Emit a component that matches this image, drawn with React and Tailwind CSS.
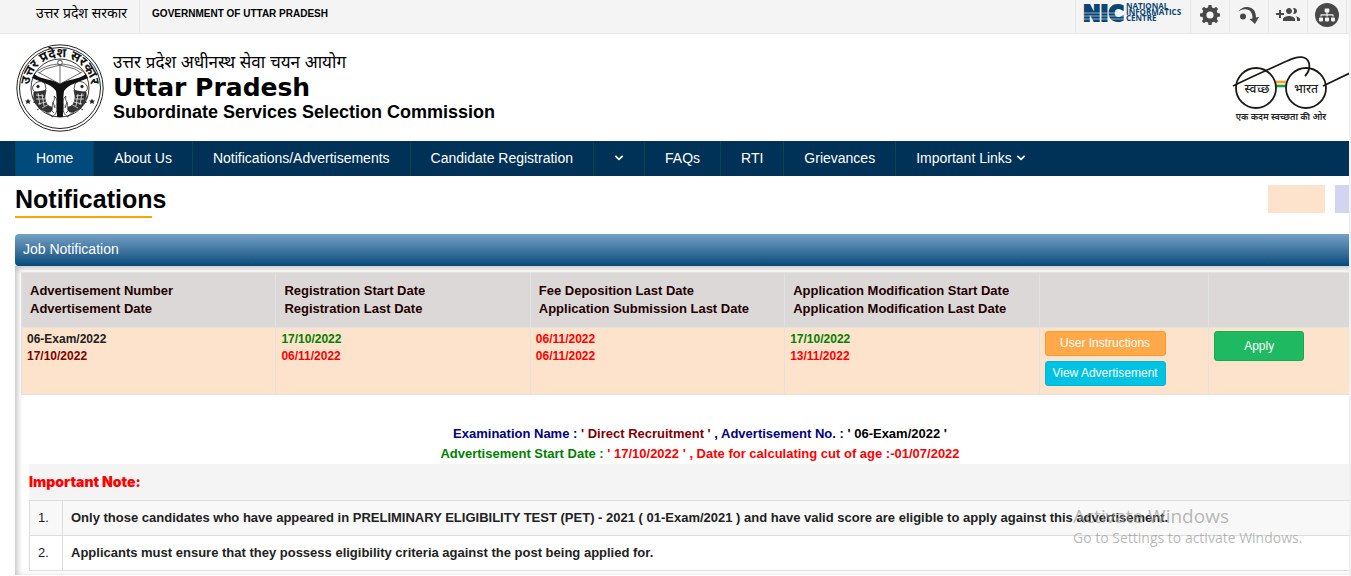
import { FaSitemap } from 'react-icons/fa';

const Chevron = () => (
  <svg viewBox="0 0 10 8" className="inline-block h-2 w-[10px]" fill="none" stroke="currentColor" strokeWidth="1.7" aria-hidden="true">
    <path d="M1.3 1.8 5 5.4 8.7 1.8" />
  </svg>
);

function Fish() {
  return (
    <g fill="none" stroke="#222" strokeWidth="0.8">
      <path d="M17 42c3-5 9-6 12-2l1 5c-2 3-6 4-10 3-3-1-4-3-3-6z" />
      <circle cx="22" cy="42.500" r="1.3" fill="#222" />
      <path d="M18 48c-1 8 3 17 13 20 4 1 6-2 5-5-4 0-8-5-7-12l1-5" fill="#333" />
      <path d="M20 51l8 1M20 55l9 0M22 60l8-2M26 64l7-4M22 49l2 12M26 50l2 12" stroke="#fff" strokeWidth="0.7" />
      <path d="M37 63c-2-5 3-6 1-11 4 3 3 7 2 10 2 4 0 9-4 11-1-4-5-2-6-6M35 66l3 3M37 58l2 6" />
      <path d="M16 52l2 3M17 58l3 1M21 66l3-2" />
    </g>
  );
}

function Emblem() {
  return (
    <svg viewBox="0 0 88 88" className="size-[88px] shrink-0" role="img" aria-label="Uttar Pradesh Sarkar">
      <defs>
        <path id="rim" d="M14 52a31 31 0 1 1 60 0" />
      </defs>
      <circle cx="44" cy="44" r="43.2" fill="#fff" stroke="#222" strokeWidth="1" />
      <circle cx="44" cy="44" r="40.5" fill="none" stroke="#222" strokeWidth="1" />
      <circle cx="44" cy="44" r="29" fill="none" stroke="#222" strokeWidth="0.9" />
      <text fontSize="13" fontWeight="700" fill="#111" fontFamily="'Noto Sans', sans-serif" textAnchor="middle">
        <textPath href="#rim" startOffset="50%">उत्तर प्रदेश सरकार</textPath>
      </text>
      <path d="M18 30C25 23 36 20 44 20s19 3 26 10M22 28l22 12 22-12M29 25l15-4 15 4M44 20v20M29 25l-6 4M59 25l6 4" fill="none" stroke="#444" strokeWidth="0.8" />
      <circle cx="44" cy="18.5" r="2.3" fill="#fff" stroke="#222" strokeWidth="0.8" />
      <path d="M18 30c8 6 19 5 26 10 7-5 18-4 26-10l2 4c-9 4-19 6-24 13-1 7-1 17-1 26h-6c0-9 0-19-1-26-5-7-15-9-24-13z" fill="#111" />
      <Fish />
      <g transform="translate(88 0) scale(-1 1)"><Fish /></g>
      <path d="M12 54.5l.9 2 2.2.1-1.7 1.4.6 2.1-2-1.2-2 1.2.6-2.1-1.7-1.4 2.2-.1zM76 54.5l.9 2 2.2.1-1.7 1.4.6 2.1-2-1.2-2 1.2.6-2.1-1.7-1.4 2.2-.1z" fill="#222" />
    </svg>
  );
}

function SwachhBharat() {
  return (
    <svg viewBox="0 0 118 72" className="h-[72px] w-[118px] shrink-0" role="img" aria-label="Swachh Bharat">
      <path d="M45 27h10" stroke="#ff9f1a" strokeWidth="2.6" />
      <path d="M45 31h10" stroke="#14a14b" strokeWidth="2.6" />
      <g fill="none" stroke="#1c1916" strokeWidth="1.8">
        <circle cx="25" cy="33" r="20" />
        <circle cx="75" cy="33" r="20" />
        <path d="M2 31C22 21 41 13 56 6c12-6 20-5 22 2 1 5 0 9-4 13" />
        <path d="M92 31 119 18" />
      </g>
      <g fill="#222" fontFamily="'Noto Sans', sans-serif" textAnchor="middle" fontWeight="500">
        <text x="26" y="38" fontSize="12">स्वच्छ</text>
        <text x="75" y="38" fontSize="12">भारत</text>
        <text x="50" y="65" fontSize="9" fontWeight="600">एक कदम स्वच्छता की ओर</text>
      </g>
    </svg>
  );
}

function NicLogo() {
  return (
    <svg viewBox="-1 -4 106 32" className="h-8 w-[106px]" role="img" aria-label="National Informatics Centre">
      <g fill="#0b4673">
        <text x="0" y="17" fontSize="21" fontWeight="700" fontFamily="'DejaVu Sans', sans-serif" stroke="#0b4673" strokeWidth="2">NIC</text>
        <g fontSize="8" fontWeight="700" fontFamily="'Open Sans', sans-serif">
          <text x="43" y="5">NATIONAL</text>
          <text x="43" y="11">INFORMATICS</text>
          <text x="43" y="17">CENTRE</text>
        </g>
      </g>
      <path d="M-1 9h42M-1 12h42M-1 15h42" stroke="#f4f4f4" strokeWidth="0.6" />
    </svg>
  );
}

const tools = [
  {
    label: 'Settings',
    icon: (
      <svg viewBox="0 0 24 24" className="size-6" fill="none" stroke="currentColor">
        <circle cx="12" cy="12" r="5.700" strokeWidth="4.200" />
        <g fill="currentColor" stroke="none">
          {[0, 45, 90, 135].map((a) => <path key={a} transform={`rotate(${a} 12 12)`} d="M10 5 10.500 2h3l.5 3v1.600h-4zM10 19l.5 3h3l.5-3v-1.600h-4z" />)}
        </g>
      </svg>
    ),
  },
  {
    label: 'Skip to main content',
    icon: (
      <svg viewBox="0 0 24 24" className="size-6" fill="currentColor">
        <path d="M1.500 8.500C4 5 7 3.500 11 4c5 .7 8 4 8 10.500l3-.5-4 7-5.500-5 3-.5C15.500 10 13.500 7 9.500 6.500 6.500 6 4 7 1.500 8.500z" />
        <circle cx="6" cy="13.500" r="3" />
      </svg>
    ),
  },
  {
    label: 'Social media',
    icon: (
      <svg viewBox="0 0 24 24" className="size-6" fill="currentColor">
        <path d="M8 10H5V7H3v3H0v2h3v3h2v-3h3v-2zm10 1c1.660 0 2.990-1.340 2.990-3S19.660 5 18 5c-.32 0-.63.05-.91.14.57.81.9 1.790.9 2.860s-.34 2.040-.9 2.860c.28.09.59.14.91.14zm-5 0c1.660 0 2.990-1.340 2.990-3S14.660 5 13 5c-1.660 0-3 1.340-3 3s1.340 3 3 3zm6.620 2.160c.83.73 1.380 1.660 1.380 2.840v2h3v-2c0-1.540-2.370-2.490-4.380-2.840zM13 13c-2 0-6 1-6 3v2h12v-2c0-2-4-3-6-3z" />
      </svg>
    ),
  },
  {
    label: 'Site map',
    icon: (
      <span className="grid size-6 place-items-center rounded-full bg-[#484848] text-[#f4f4f4]">
        <FaSitemap className="size-4" />
      </span>
    ),
  },
];

const nav = ['Home', 'About Us', 'Notifications/Advertisements', 'Candidate Registration', '', 'FAQs', 'RTI', 'Grievances', 'Important Links'];

const heads = [
  ['Advertisement Number', 'Advertisement Date'],
  ['Registration Start Date', 'Registration Last Date'],
  ['Fee Deposition Last Date', 'Application Submission Last Date'],
  ['Application Modification Start Date', 'Application Modification Last Date'],
];

const cells = [
  ['06-Exam/2022', 'text-[#222]', '17/10/2022', 'text-[#800000]'],
  ['17/10/2022', 'text-[#008000]', '06/11/2022', 'text-[#f00]'],
  ['06/11/2022', 'text-[#f00]', '06/11/2022', 'text-[#f00]'],
  ['17/10/2022', 'text-[#008000]', '13/11/2022', 'text-[#f00]'],
];

const notes = [
  'Only those candidates who have appeared in PRELIMINARY ELIGIBILITY TEST (PET) - 2021 ( 01-Exam/2021 ) and have valid score are eligible to apply against this advertisement.',
  'Applicants must ensure that they possess eligibility criteria against the post being applied for.',
];

export default function App() {
  return (
    <div className="relative min-h-screen overflow-hidden border-r-2 border-[#f0f0f0] bg-white font-['Liberation_Sans','Noto_Sans',sans-serif] text-black">
      <div className="flex h-[34px] justify-between border-b border-[#e8e8e8] bg-[#f4f4f4]">
        <div className="flex pl-9">
          <a href="#up" className="border-r border-[#e6e6e6] pr-3 text-sm leading-[27px]">उत्तर प्रदेश सरकार</a>
          <a href="#gov" className="pl-3 text-[10px] leading-[27px] font-bold">GOVERNMENT OF UTTAR PRADESH</a>
        </div>
        <div className="flex text-[#484848]">
          <a href="#nic" className="w-[115px] border-l border-[#e6e6e6] pl-[6px]"><NicLogo /></a>
          {tools.map((t) => (
            <button key={t.label} aria-label={t.label} className="flex w-[39px] justify-center border-l border-[#e6e6e6] pt-[3px]">
              {t.icon}
            </button>
          ))}
          <div className="w-[3px] border-l border-[#e6e6e6]" />
        </div>
      </div>

      <header className="flex h-[107px] items-start justify-between pl-4">
        <div className="flex gap-[9px] pt-[10px]">
          <Emblem />
          <div className="pt-[6px]">
            <div className="text-[17px] leading-[25px]">उत्तर प्रदेश अधीनस्थ सेवा चयन आयोग</div>
            <div className="font-['DejaVu_Sans',sans-serif] text-[25px] leading-[26px] font-bold">Uttar Pradesh</div>
            <div className="text-lg leading-[22px] font-bold">Subordinate Services Selection Commission</div>
          </div>
        </div>
        <div className="pt-[21px]"><SwachhBharat /></div>
      </header>

      <nav className="flex h-[35px] bg-[#003156] pl-[15px] text-sm text-white">
        {nav.map((n) => (
          <a
            key={n}
            href="#nav"
            aria-label={n || 'More'}
            className={`flex items-center gap-1 px-5 pb-px ${n === 'Home' ? 'border-x border-[#024a4a] bg-[#004a7c]' : n === 'Important Links' ? '' : 'border-r border-[#024a4a]'}`}
          >
            {n}
            {(n === '' || n === 'Important Links') && <Chevron />}
          </a>
        ))}
      </nav>

      <main className="pl-[15px]">
        <div className="flex h-[58px] items-start justify-between">
          <div className="pt-[7px]">
            <h1 className="mb-px text-[25px] leading-8 font-bold">Notifications</h1>
            <div className="h-[2px] w-[137px] bg-[#ffa500]" />
          </div>
          <div className="flex gap-[10px] pt-[9px]">
            <div className="h-7 w-[57px] bg-[#fee3cc]" />
            <div className="h-7 w-[14px] bg-[#d3d3f2]" />
          </div>
        </div>

        <section className="-mr-9">
          <h2 className="h-8 rounded-l-sm bg-linear-to-b from-[#75a2c5] to-[#004b7c] pl-2 text-sm leading-[31px] text-white">Job Notification</h2>
          <div className="overflow-hidden pt-[6px] pb-1 pl-[6px] shadow-[inset_2px_2px_6px_0px_#bbb]">
            <table className="w-[1697px] table-fixed border-collapse text-left">
              <colgroup>
                <col className="w-[15%]" /><col className="w-[15%]" /><col className="w-[15%]" /><col className="w-[15%]" /><col className="w-[10%]" /><col />
              </colgroup>
              <thead>
                <tr className="h-[55px] bg-[#dcd8d8] text-[13px] leading-[18px] text-[#200]">
                  {heads.map((h) => (
                    <th key={h[0]} className="border border-[#e2e2e2] px-2 font-bold">{h[0]}<br />{h[1]}</th>
                  ))}
                  <th className="border border-[#e2e2e2]" aria-label="Documents" />
                  <th className="border border-[#e2e2e2]" aria-label="Action" />
                </tr>
              </thead>
              <tbody>
                <tr className="h-[67px] bg-[#fee3cc] align-top text-xs leading-[17px] font-bold">
                  {cells.map((c, i) => (
                    <td key={i} className="border border-[#e2e2e2] px-[5px] pt-[3px]">
                      <div className={c[1]}>{c[0]}</div>
                      <div className={c[3]}>{c[2]}</div>
                    </td>
                  ))}
                  <td className="border border-[#e2e2e2] px-[5px] pt-[3px] font-normal text-white">
                    <div className="flex w-[121px] flex-col gap-[5px]">
                      <button className="h-[25px] rounded-[3px] border border-[#ff9b2b] bg-[#ffa94a]">User Instructions</button>
                      <button className="h-[25px] rounded-[3px] border border-[#00b5d8] bg-[#00c3e3]">View Advertisement</button>
                    </div>
                  </td>
                  <td className="border border-[#e2e2e2] px-[5px] pt-[3px] font-normal text-white">
                    <button className="h-[30px] w-[90px] rounded-[3px] border border-[#0faf50] bg-[#1fb962]">Apply</button>
                  </td>
                </tr>
              </tbody>
            </table>

            <div className="pt-7 pr-[6px] text-center text-[13px] leading-[21px] font-bold text-[#000080]">
              <p>Examination Name : <span className="text-[#800000]">' Direct Recruitment '</span> , Advertisement No. : <span className="text-black">' 06-Exam/2022 '</span></p>
              <p className="leading-5 text-[#008000]">Advertisement Start Date : <span className="text-[#f00]">' 17/10/2022 ' , Date for calculating cut of age :-01/07/2022</span></p>
            </div>

            <div className="pl-2">
              <h3 className="h-9 bg-[#f4f4f4] font-['Inter',sans-serif] text-sm leading-[35px] font-black text-[#f00]">Important Note:</h3>
              <table className="w-full border-collapse text-[13px] text-[#222]">
                <tbody>
                  {notes.map((n, i) => (
                    <tr key={n} className="h-[35px] odd:bg-[#f8f8f8]">
                      <td className="w-[33px] border border-[#ddd] px-2">{i + 1}.</td>
                      <td className="border border-[#ddd] px-2 font-bold">{n}</td>
                    </tr>
                  ))}
                </tbody>
              </table>
            </div>
          </div>
        </section>
      </main>

      <div className="pointer-events-none absolute right-10 bottom-7 w-[236px] font-['Open_Sans',sans-serif] text-[#999]/70">
        <div className="text-[19px] leading-6">Activate Windows</div>
        <div className="text-sm leading-5 whitespace-nowrap">Go to Settings to activate Windows.</div>
      </div>
    </div>
  );
}
